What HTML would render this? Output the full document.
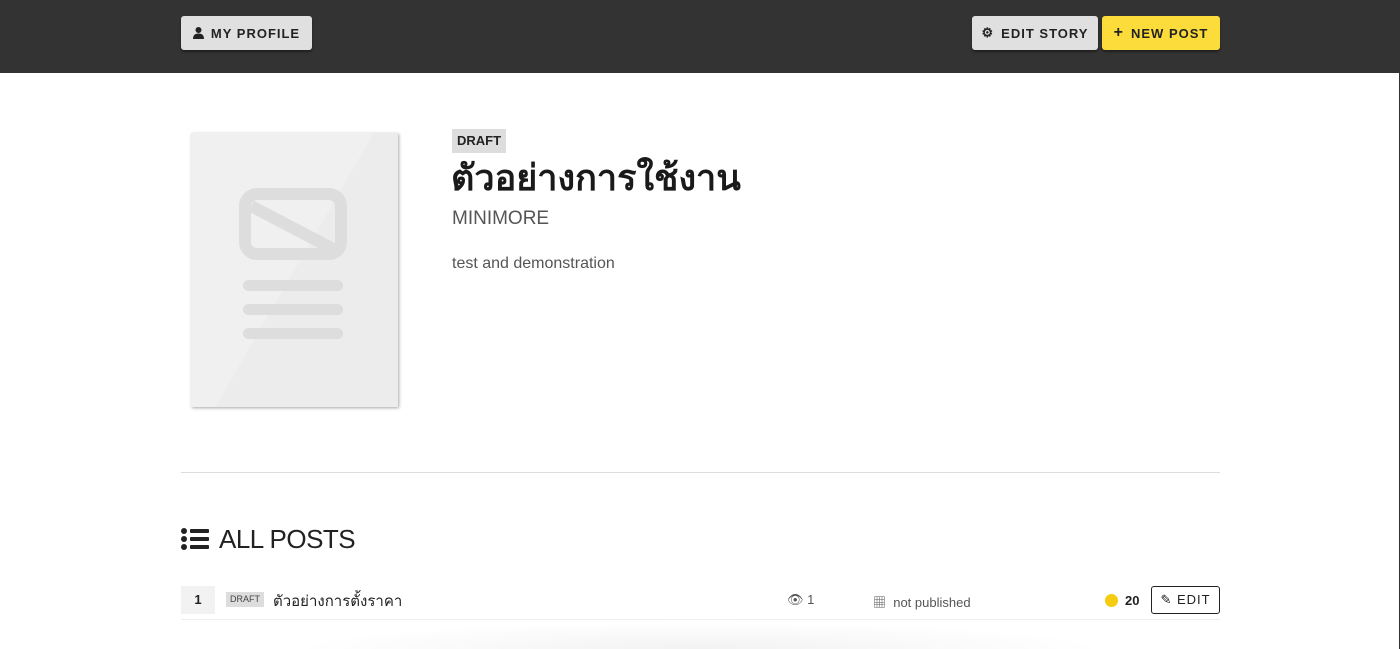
<!DOCTYPE html>
<html><head><meta charset="utf-8"><style>
*{box-sizing:border-box;margin:0;padding:0}
body{width:1400px;height:649px;overflow:hidden;background:#fff;font-family:"Liberation Sans","Noto Sans CJK SC",sans-serif;color:#222;position:relative}
.top{position:absolute;left:0;top:0;width:1400px;height:73px;background:#333}
.btn{position:absolute;top:16px;height:34px;border-radius:3px;background:#e0e0e0;box-shadow:0 2px 2px rgba(0,0,0,.4);font-size:13px;font-weight:bold;letter-spacing:1px;color:#222;display:flex;align-items:center;justify-content:center;gap:7px}
.cover{position:absolute;left:191px;top:133px;width:207px;height:274px;background:linear-gradient(120deg,#f0f0f0 50%,#ececec 50%);box-shadow:1px 1px 3px rgba(0,0,0,.35)}
.abs{position:absolute}
</style></head><body>
<div class="top"></div>
<div class="btn" style="left:181px;width:131px"><svg width="11" height="12" viewBox="0 0 11 12"><circle cx="5.5" cy="3" r="3" fill="#222"/><path d="M0 12 Q0 6.5 5.5 6.5 Q11 6.5 11 12Z" fill="#222"/></svg>MY PROFILE</div>
<div class="btn" style="left:972px;width:126px"><span style="font-size:13px">⚙</span>EDIT STORY</div>
<div class="btn" style="left:1102px;width:118px;background:#fbdc3a"><span style="font-size:16px">+</span>NEW POST</div>
<div class="cover">
<svg class="abs" style="left:48px;top:55px" width="108" height="155" viewBox="0 0 108 155"><rect x="6" y="6" width="96" height="60" rx="12" fill="none" stroke="#ddd" stroke-width="12"/><path d="M12 18 L96 62" stroke="#ddd" stroke-width="12"/><rect x="4" y="92" width="100" height="11" rx="5.5" fill="#ddd"/><rect x="4" y="116" width="100" height="11" rx="5.5" fill="#ddd"/><rect x="4" y="140" width="100" height="11" rx="5.5" fill="#ddd"/></svg>
</div>
<div class="abs" style="left:452px;top:129px;height:24px;padding:0 5px;background:#ddd;font-size:13px;font-weight:bold;line-height:24px">DRAFT</div>
<div class="abs" style="left:451px;top:153px;font-size:36px;line-height:50px;color:#1a1a1a;font-weight:bold">ตัวอย่างการใช้งาน</div>
<div class="abs" style="left:452px;top:208px;font-size:19px;color:#555">MINIMORE</div>
<div class="abs" style="left:452px;top:255px;font-size:16px;color:#555">test and demonstration</div>
<div class="abs" style="left:181px;top:472px;width:1039px;height:1px;background:#ddd"></div>
<svg class="abs" style="left:181px;top:528px" width="28" height="22" viewBox="0 0 28 22"><circle cx="3" cy="3" r="3" fill="#222"/><circle cx="3" cy="11" r="3" fill="#222"/><circle cx="3" cy="19" r="3" fill="#222"/><rect x="9" y="1" width="19" height="4" rx="1" fill="#222"/><rect x="9" y="9" width="19" height="4" rx="1" fill="#222"/><rect x="9" y="17" width="19" height="4" rx="1" fill="#222"/></svg>
<div class="abs" style="left:219px;top:524px;font-size:26px;color:#222;letter-spacing:-0.5px">ALL POSTS</div>
<div class="abs" style="left:181px;top:586px;width:34px;height:28px;background:#f2f2f2;font-size:13px;font-weight:bold;text-align:center;line-height:28px">1</div>
<div class="abs" style="left:226px;top:592px;height:15px;padding:0 4px;background:#ddd;font-size:9px;line-height:15px;color:#444">DRAFT</div>
<div class="abs" style="left:273px;top:589px;font-size:15px">ตัวอย่างการตั้งราคา</div>
<div class="abs" style="left:787px;top:592px;font-size:13px;color:#555">👁︎ 1</div>
<div class="abs" style="left:873px;top:592px;font-size:13px;color:#555">▦ &nbsp;not published</div>
<div class="abs" style="left:1105px;top:594px;width:13px;height:13px;border-radius:50%;background:#f5cc10"></div>
<div class="abs" style="left:1125px;top:593px;font-size:13px;font-weight:bold">20</div>
<div class="abs" style="left:1151px;top:586px;width:69px;height:28px;border:1px solid #222;border-radius:3px;font-size:13px;letter-spacing:1px;text-align:center;line-height:26px">✎ EDIT</div>
<div class="abs" style="left:181px;top:619px;width:1039px;height:1px;background:#eee"></div>
<div class="abs" style="left:290px;top:622px;width:820px;height:27px;background:radial-gradient(ellipse at 50% 100%,rgba(0,0,0,.05),rgba(0,0,0,0) 70%)"></div>
<div class="abs" style="left:1399px;top:73px;width:1px;height:576px;background:#333"></div>
</body></html>
